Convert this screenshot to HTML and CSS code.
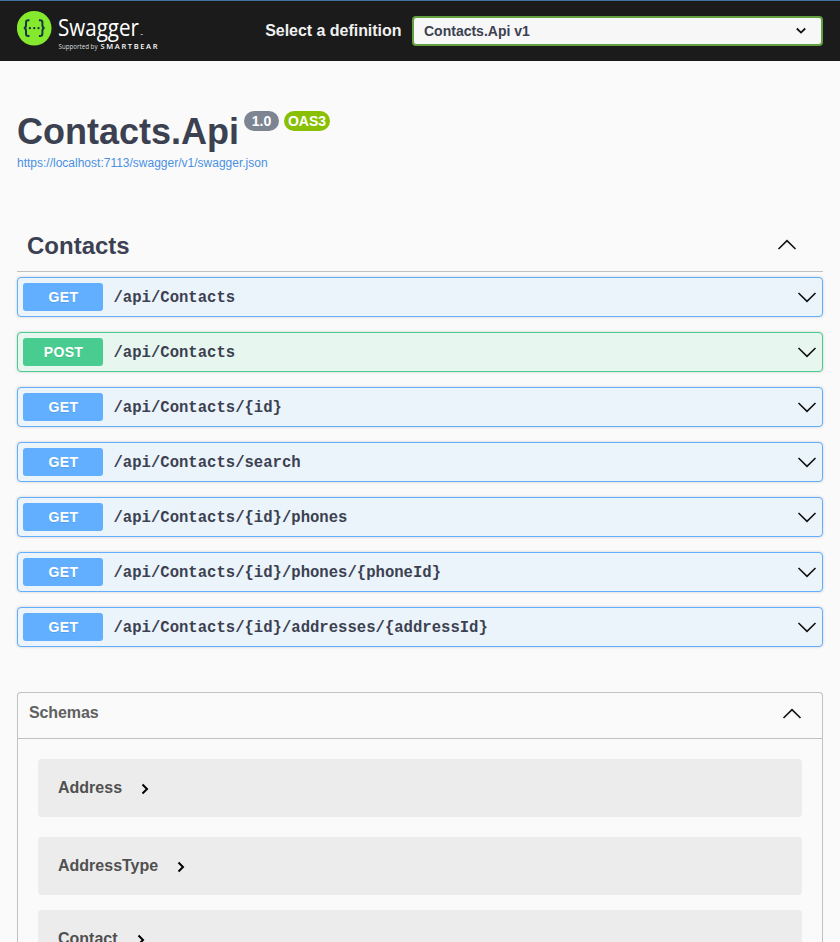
FILE: index.html
```html
<!DOCTYPE html>
<html lang="en">
<head>
<meta charset="utf-8">
<title>Swagger UI</title>
<link rel="stylesheet" href="styles.css">
</head>
<body>
<header class="topbar">
  <svg class="logo" width="150" height="50" viewBox="0 0 150 50">
    <circle cx="17.2" cy="18.2" r="17.3" fill="#85ea2d"/>
    <g fill="none" stroke="#173647" stroke-width="2">
      <path d="M12.500 10.200h-1.200q-2.300 0-2.300 2.300v2.800q0 2.800-2.200 2.800 2.200 0 2.200 2.800v2.800q0 2.300 2.300 2.300h1.200"/>
      <path d="M21.900 10.200h1.200q2.300 0 2.300 2.300v2.800q0 2.800 2.200 2.800-2.200 0-2.200 2.800v2.800q0 2.300-2.300 2.300h-1.200"/>
    </g>
    <g fill="#173647"><circle cx="12.900" cy="18.100" r="1.200"/><circle cx="17.200" cy="18.100" r="1.200"/><circle cx="21.500" cy="18.100" r="1.200"/></g>
    <text class="brand" x="41" y="25.500" textLength="81" lengthAdjust="spacingAndGlyphs">Swagger</text>
    <path d="M123.500 24.500h2.500" stroke="#999" stroke-width="1"/>
    <text class="support" x="41.500" y="39.300" textLength="39" lengthAdjust="spacingAndGlyphs">Supported by</text>
    <text class="smart" x="83.500" y="39" textLength="57">SMARTBEAR</text>
  </svg>
  <label class="definition"><span>Select a definition</span>
    <span class="select">Contacts.Api v1
      <svg width="12" height="8" viewBox="0 0 12 8"><path d="M1.800 1.500 6 5.600l4.200-4.100"/></svg>
    </span>
  </label>
</header>
<main>
  <section class="info">
    <h1>Contacts.Api</h1><span class="badge version">1.0</span><span class="badge oas">OAS3</span>
  </section>
  <a class="spec">https://localhost:7113/swagger/v1/swagger.json</a>
  <section class="operations">
    <div class="tag"><h2>Contacts</h2><svg class="chev" width="20" height="12" viewBox="0 0 20 12"><path d="M1.500 10 10 1.700l8.500 8.300"/></svg></div>
    <div class="op get"><b>GET</b><code>/api/Contacts</code><svg class="chev" width="20" height="12" viewBox="0 0 20 12"><path d="M1.500 2 10 10.300 18.500 2"/></svg></div>
    <div class="op post"><b>POST</b><code>/api/Contacts</code><svg class="chev" width="20" height="12" viewBox="0 0 20 12"><path d="M1.500 2 10 10.300 18.500 2"/></svg></div>
    <div class="op get"><b>GET</b><code>/api/Contacts/{id}</code><svg class="chev" width="20" height="12" viewBox="0 0 20 12"><path d="M1.500 2 10 10.300 18.500 2"/></svg></div>
    <div class="op get"><b>GET</b><code>/api/Contacts/search</code><svg class="chev" width="20" height="12" viewBox="0 0 20 12"><path d="M1.500 2 10 10.300 18.500 2"/></svg></div>
    <div class="op get"><b>GET</b><code>/api/Contacts/{id}/phones</code><svg class="chev" width="20" height="12" viewBox="0 0 20 12"><path d="M1.500 2 10 10.300 18.500 2"/></svg></div>
    <div class="op get"><b>GET</b><code>/api/Contacts/{id}/phones/{phoneId}</code><svg class="chev" width="20" height="12" viewBox="0 0 20 12"><path d="M1.500 2 10 10.300 18.500 2"/></svg></div>
    <div class="op get"><b>GET</b><code>/api/Contacts/{id}/addresses/{addressId}</code><svg class="chev" width="20" height="12" viewBox="0 0 20 12"><path d="M1.500 2 10 10.300 18.500 2"/></svg></div>
  </section>
  <section class="schemas">
    <div class="schemas-head"><h3>Schemas</h3><svg class="chev" width="20" height="12" viewBox="0 0 20 12"><path d="M1.500 10 10 1.700l8.500 8.300"/></svg></div>
    <div class="model"><span>Address</span><svg width="8" height="12" viewBox="0 0 8 12"><path d="M1.500 1.500 6 6l-4.500 4.500"/></svg></div>
    <div class="model"><span>AddressType</span><svg width="8" height="12" viewBox="0 0 8 12"><path d="M1.500 1.500 6 6l-4.500 4.500"/></svg></div>
    <div class="model last"><span>Contact</span><svg width="8" height="12" viewBox="0 0 8 12"><path d="M1.500 1.500 6 6l-4.500 4.500"/></svg></div>
  </section>
</main>
</body>
</html>
```
FILE: styles.css
```css
* { box-sizing: border-box; }
html { height: 100%; overflow: hidden; }
body { margin: 0; height: 942px; overflow: hidden; background: #fafafa; color: #3b4151; font-family: "Liberation Sans", Arial, sans-serif; }
h1, h2, h3 { margin: 0; }
svg { display: block; flex: none; }
.topbar { height: 61px; background: #1b1b1b; border-top: 1px solid #41719c; padding: 9px 17px 0; display: flex; justify-content: space-between; }
.logo text { fill: #fff; font-family: "Open Sans", sans-serif; }
.logo .brand { font-size: 22.8px; }
.logo .support { font-size: 6.5px; fill: #ddd; }
.logo .smart { font-size: 7.5px; font-weight: 600; }
.definition { display: flex; height: 30px; margin-top: 6px; align-items: center; color: #f0f0f0; font-size: 16px; font-weight: 700; }
.definition > span:first-child { margin: -1px 10.500px 0 0; letter-spacing: -.03px; }
.select { width: 411px; height: 30px; border: 2px solid #62a03f; border-radius: 4px; background: #f7f7f7; color: #3b4151; font-size: 14px; display: flex; align-items: center; justify-content: space-between; padding: 0 14px 0 10px; }
.select svg path { fill: none; stroke: #111; stroke-width: 1.8; }
main { padding: 0 17px; }
.info { display: flex; align-items: flex-start; padding-top: 49px; height: 94px; }
h1 { font-size: 36px; line-height: 44px; }
.badge { height: 20px; margin: 1px 0 0 5px; border-radius: 10px; color: #fff; font-size: 14px; font-weight: 700; line-height: 20px; text-align: center; }
.version { width: 35px; background: #7d8492; }
.oas { width: 46px; background: #89bf04; }
.spec { display: block; font-size: 12px; line-height: 16px; color: #4990e2; }
.tag { margin-top: 50px; height: 51px; border-bottom: 1px solid #c0c1c5; display: flex; align-items: center; justify-content: space-between; padding: 0 26px 2px 10px; }
h2 { font-size: 24px; line-height: 28px; padding-top: 2px; }
.chev path { fill: none; stroke: #111; stroke-width: 1.6; }
.op { height: 40px; margin: 0 0 15px; border: 1px solid; border-radius: 4px; box-shadow: 0 0 3px rgba(0,0,0,.19); display: flex; align-items: center; padding: 0 5px; }
.tag + .op { margin-top: 5px; }
.get { border-color: #61affe; background: #ebf3fb; }
.post { border-color: #49cc90; background: #e8f6f0; }
.op b { width: 80px; height: 28px; border-radius: 3px; color: #fff; font-size: 14px; line-height: 28px; text-align: center; text-shadow: 0 1px 0 rgba(0,0,0,.1); letter-spacing: .35px; padding-left: 1px; }
.get b { background: #61affe; }
.post b { background: #49cc90; }
code { flex: 1; padding: 1px 0 0 10.5px; font: 700 15.6px "Liberation Mono", monospace; }
.schemas { margin-top: 45px; height: 250px; overflow: hidden; border: 1px solid #c0c1c5; border-bottom: 0; border-radius: 4px 4px 0 0; }
.schemas-head { height: 46px; margin-bottom: 20px; border-bottom: 1px solid #c0c1c5; display: flex; align-items: center; justify-content: space-between; padding: 0 20px 4px 11px; color: #606060; }
h3 { font-size: 16px; line-height: 20px; padding-bottom: 2px; letter-spacing: -.1px; }
.model { height: 58px; margin: 0 20px 20px; border-radius: 4px; background: #ececec; display: flex; align-items: center; padding: 0 20px; font-size: 16px; font-weight: 700; color: #505050; }
.model span { margin: -1px 19px 0 0; }
.model svg { margin-top: 2px; }
.model svg path { fill: none; stroke: #000; stroke-width: 2; }
.model.last { margin-top: -5px; }
```
